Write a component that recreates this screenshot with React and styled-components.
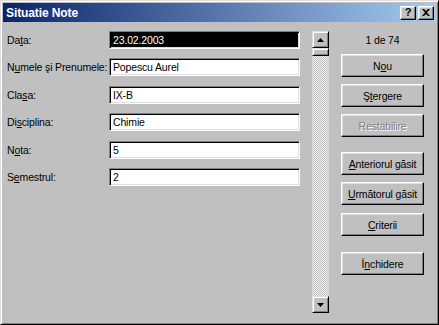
import React from "react";
import styled, { createGlobalStyle } from "styled-components";

const Global = createGlobalStyle`
  html, body { margin: 0; padding: 0; background: #c0c0c0; }
  #root { width: 439px; height: 325px; }
  * { box-sizing: border-box; }
`;

const Window = styled.div`
  width: 439px;
  height: 325px;
  background: #c0c0c0;
  border: 1px solid;
  border-color: #dfdfdf #000 #000 #dfdfdf;
  box-shadow: inset 1px 1px #fff, inset -1px -1px #808080;
  padding: 2px;
  display: flex;
  flex-direction: column;
  font-family: "Liberation Sans", Arial, sans-serif;
  font-size: 10.5px;
  letter-spacing: -0.15px;
  color: #000;
`;

const TitleBar = styled.div`
  height: 19px;
  background: linear-gradient(to right, #0a246a, #a6caf0);
  display: flex;
  align-items: center;
  padding: 0 2px 0 3px;
`;

const Title = styled.div`
  flex: 1;
  color: #fff;
  font-weight: bold;
  font-size: 12px;
  letter-spacing: -0.1px;
`;

const CaptionButton = styled.div`
  width: 16px;
  height: 14px;
  margin-left: ${(p) => (p.$gap ? "2px" : "0")};
  background: #c0c0c0;
  border: 1px solid;
  border-color: #fff #000 #000 #fff;
  box-shadow: inset -1px -1px #808080, inset 1px 1px #dfdfdf;
  display: flex;
  align-items: center;
  justify-content: center;
  font-weight: bold;
  font-size: 11px;
  line-height: 1;
  color: #000;
`;

const Body = styled.div`
  flex: 1;
  display: flex;
  padding: 9px 0 0 4px;
`;

const Fields = styled.div`
  display: grid;
  grid-template-columns: 102px 191px;
  grid-auto-rows: 18px;
  row-gap: 9.4px;
  align-items: center;
  align-content: start;
`;

const Label = styled.div`
  white-space: nowrap;
`;

const Input = styled.div`
  height: 18px;
  background: ${(p) => (p.$selected ? "#000" : "#fff")};
  color: ${(p) => (p.$selected ? "#fff" : "#000")};
  border: 1px solid;
  border-color: #808080 #fff #fff #808080;
  box-shadow: inset 1px 1px #000, inset -1px -1px #dfdfdf;
  padding: 0 3px;
  display: flex;
  align-items: center;
  white-space: nowrap;
`;

const ScrollBar = styled.div`
  width: 17px;
  height: 282px;
  margin-left: 12px;
  display: flex;
  flex-direction: column;
  background-color: #fff;
  background-image: repeating-conic-gradient(#c0c0c0 0 25%, #f0f0f0 0 50%);
  background-size: 2px 2px;
`;

const ArrowButton = styled.div`
  width: 17px;
  height: 17px;
  background: #c0c0c0;
  border: 1px solid;
  border-color: #dfdfdf #000 #000 #dfdfdf;
  box-shadow: inset 1px 1px #fff, inset -1px -1px #808080;
  display: flex;
  align-items: center;
  justify-content: center;
`;

const Thumb = styled.div`
  width: 17px;
  height: 8px;
  background: #c0c0c0;
  border: 1px solid;
  border-color: #dfdfdf #000 #000 #dfdfdf;
  box-shadow: inset 1px 1px #fff, inset -1px -1px #808080;
`;

const Track = styled.div`
  flex: 1;
`;

const Side = styled.div`
  width: 83px;
  margin-left: 12px;
  display: flex;
  flex-direction: column;
`;

const Counter = styled.div`
  height: 18px;
  display: flex;
  align-items: center;
  justify-content: center;
  margin-bottom: 5px;
`;

const Button = styled.div`
  height: 23px;
  margin-bottom: ${(p) => p.$mb}px;
  background: #c0c0c0;
  border: 1px solid;
  border-color: #fff #000 #000 #fff;
  box-shadow: inset -1px -1px #808080, inset 1px 1px #dfdfdf;
  display: flex;
  align-items: center;
  justify-content: center;
  white-space: nowrap;
  color: ${(p) => (p.$disabled ? "#808080" : "#000")};
  text-shadow: ${(p) => (p.$disabled ? "1px 1px 0 #fff" : "none")};
`;

const Arrow = ({ down }) => (
  <svg width="7" height="4" viewBox="0 0 7 4">
    <polygon
      points={down ? "0,0 7,0 3.5,4" : "3.5,0 7,4 0,4"}
      fill="#000"
    />
  </svg>
);

const fields = [
  { label: ["Da", "t", "a:"], value: "23.02.2003", selected: true },
  { label: ["N", "u", "mele şi Prenumele:"], value: "Popescu Aurel" },
  { label: ["Cla", "s", "a:"], value: "IX-B" },
  { label: ["Di", "s", "ciplina:"], value: "Chimie" },
  { label: ["N", "o", "ta:"], value: "5" },
  { label: ["S", "e", "mestrul:"], value: "2" },
];

const buttons = [
  { t: ["N", "o", "u"], mb: 7 },
  { t: ["Ş", "t", "ergere"], mb: 7 },
  { t: ["", "", "Restabilire"], mb: 15, disabled: true },
  { t: ["", "A", "nteriorul găsit"], mb: 7 },
  { t: ["", "U", "rmătorul găsit"], mb: 8 },
  { t: ["", "C", "riterii"], mb: 16 },
  { t: ["Î", "n", "chidere"], mb: 0 },
];

export default function App() {
  return (
    <>
      <Global />
      <Window>
        <TitleBar>
          <Title>Situatie Note</Title>
          <CaptionButton>?</CaptionButton>
          <CaptionButton $gap>
            <svg width="8" height="7" viewBox="0 0 8 7">
              <path d="M0 0 L2 0 L4 2 L6 0 L8 0 L5 3.5 L8 7 L6 7 L4 5 L2 7 L0 7 L3 3.5 Z" fill="#000" />
            </svg>
          </CaptionButton>
        </TitleBar>
        <Body>
          <Fields>
            {fields.map((f, i) => (
              <React.Fragment key={i}>
                <Label>
                  {f.label[0]}
                  <u>{f.label[1]}</u>
                  {f.label[2]}
                </Label>
                <Input $selected={f.selected}>{f.value}</Input>
              </React.Fragment>
            ))}
          </Fields>
          <ScrollBar>
            <ArrowButton>
              <Arrow />
            </ArrowButton>
            <Thumb />
            <Track />
            <ArrowButton>
              <Arrow down />
            </ArrowButton>
          </ScrollBar>
          <Side>
            <Counter>1 de 74</Counter>
            {buttons.map((b, i) => (
              <Button key={i} $mb={b.mb} $disabled={b.disabled}>
                {b.t[0]}
                {b.t[1] && <u>{b.t[1]}</u>}
                {b.t[2]}
              </Button>
            ))}
          </Side>
        </Body>
      </Window>
    </>
  );
}
